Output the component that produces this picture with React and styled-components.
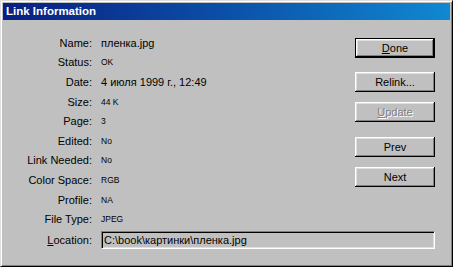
import React from 'react';
import styled, { createGlobalStyle } from 'styled-components';

const GlobalStyle = createGlobalStyle`
  html, body {
    margin: 0;
    padding: 0;
    background: #c0c0c0;
  }
  * {
    box-sizing: border-box;
  }
`;

const Window = styled.div`
  width: 453px;
  height: 267px;
  background: #c0c0c0;
  border: 1px solid;
  border-color: #dfdfdf #000 #000 #dfdfdf;
  box-shadow: inset 1px 1px #fff, inset -1px -1px #808080;
  padding: 2px;
  font-family: 'Liberation Sans', Arial, sans-serif;
  color: #000;
  display: flex;
  flex-direction: column;
`;

const TitleBar = styled.div`
  height: 17px;
  flex-shrink: 0;
  background: linear-gradient(to right, #0a1f80 0%, #0b50a8 50%, #1088d2 100%);
  color: #fff;
  font-weight: bold;
  font-size: 11.5px;
  line-height: 17px;
  padding-left: 3px;
`;

const Body = styled.div`
  flex: 1;
  display: grid;
  grid-template-columns: 81px 1fr 80px;
  grid-template-rows: repeat(10, 19.6px) 22px;
  column-gap: 9px;
  padding: 13px 15px 0 8px;
`;

const Label = styled.div`
  grid-column: 1;
  text-align: right;
  font-size: 11px;
  align-self: center;
  white-space: nowrap;
`;

const Value = styled.div`
  grid-column: 2;
  align-self: center;
  white-space: nowrap;
  font-size: ${(p) => (p.$small ? '8.5px' : '11px')};
`;

const ButtonColumn = styled.div`
  grid-column: 3;
  grid-row: 1 / span 10;
  display: flex;
  flex-direction: column;
  padding-top: 5px;
`;

const Button = styled.div`
  height: 20px;
  margin-top: ${(p) => p.$gap || 0}px;
  background: #c0c0c0;
  border: ${(p) => (p.$default ? '1px solid #000' : 'none')};
  box-shadow: inset -1px -1px #000, inset 1px 1px #fff, inset -2px -2px #808080,
    inset 2px 2px #dfdfdf;
  font-size: 11px;
  display: flex;
  align-items: center;
  justify-content: center;
  color: ${(p) => (p.$disabled ? '#808080' : '#000')};
  text-shadow: ${(p) => (p.$disabled ? '1px 1px 0 #fff' : 'none')};
`;

const Mnemonic = styled.span`
  text-decoration: underline;
`;

const LocationBox = styled.div`
  grid-column: 2 / span 2;
  align-self: center;
  height: 18px;
  border: 1px solid;
  border-color: #808080 #fff #fff #808080;
  box-shadow: inset 1px 1px #000, inset -1px -1px #dfdfdf;
  background: #c0c0c0;
  font-size: 11px;
  line-height: 16px;
  padding-left: 2px;
  white-space: nowrap;
`;

const info = [
  { label: 'Name:', value: 'пленка.jpg' },
  { label: 'Status:', value: 'OK', small: true },
  { label: 'Date:', value: '4 июля 1999 г., 12:49' },
  { label: 'Size:', value: '44 K', small: true },
  { label: 'Page:', value: '3', small: true },
  { label: 'Edited:', value: 'No', small: true },
  { label: 'Link Needed:', value: 'No', small: true },
  { label: 'Color Space:', value: 'RGB', small: true },
  { label: 'Profile:', value: 'NA', small: true },
  { label: 'File Type:', value: 'JPEG', small: true },
];

export default function App() {
  return (
    <>
      <GlobalStyle />
      <Window>
        <TitleBar>Link Information</TitleBar>
        <Body>
          {info.map((row, i) => (
            <React.Fragment key={row.label}>
              <Label style={{ gridRow: i + 1 }}>{row.label}</Label>
              <Value $small={row.small} style={{ gridRow: i + 1 }}>
                {row.value}
              </Value>
            </React.Fragment>
          ))}
          <ButtonColumn>
            <Button $default>
              <Mnemonic>D</Mnemonic>one
            </Button>
            <Button $gap={14}>Relink...</Button>
            <Button $gap={10} $disabled>
              <Mnemonic>U</Mnemonic>pdate
            </Button>
            <Button $gap={15}>Prev</Button>
            <Button $gap={10}>Next</Button>
          </ButtonColumn>
          <Label style={{ gridRow: 11 }}>
            <Mnemonic>L</Mnemonic>ocation:
          </Label>
          <LocationBox style={{ gridRow: 11 }}>C:\book\картинки\пленка.jpg</LocationBox>
        </Body>
      </Window>
    </>
  );
}
